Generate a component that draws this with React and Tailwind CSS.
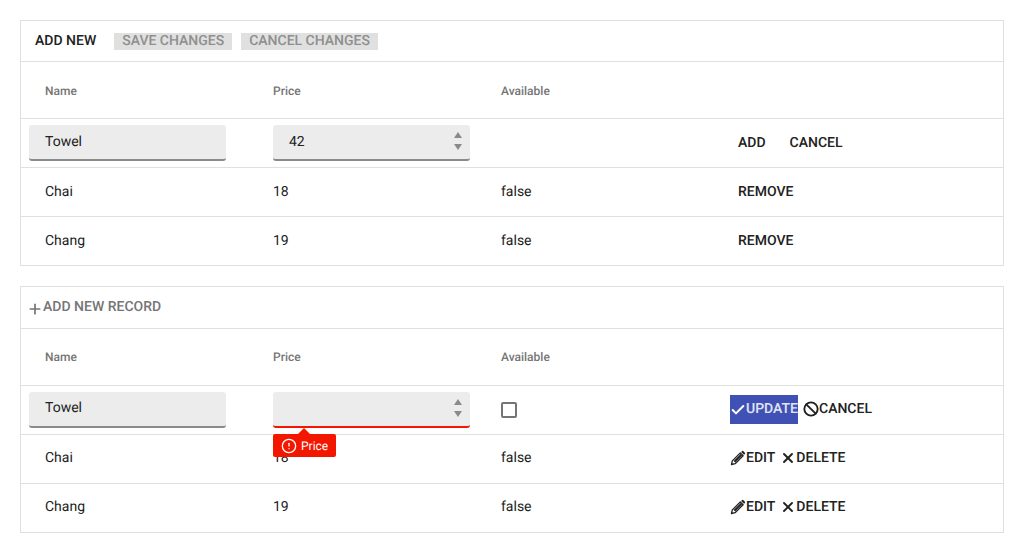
import { Check, Plus, Ban, X, CircleAlert } from 'lucide-react';

const font = { fontFamily: 'Roboto, sans-serif' };

const Spinner = () => (
  <div className="absolute right-[8px] top-[7px] flex flex-col gap-[6px]">
    <div className="w-0 h-0 mx-auto border-x-[4px] border-x-transparent border-b-[6px] border-b-[#8a8a8a]" />
    <div className="w-0 h-0 mx-auto border-x-[4px] border-x-transparent border-t-[6px] border-t-[#8a8a8a]" />
  </div>
);

const PencilIcon = () => (
  <svg width="16" height="16" viewBox="0 0 16 16" className="shrink-0">
    <path d="M1.5 14.5l.8-3.6 8-8 2.8 2.8-8 8z" fill="none" stroke="currentColor" strokeWidth="1.3" strokeLinejoin="round" />
    <path d="M3.6 10.9l7-7 1.5 1.5-7 7z" fill="currentColor" />
    <path d="M11.2 2l.9-.9a.8.8 0 0 1 1.1 0l1.7 1.7a.8.8 0 0 1 0 1.1l-.9.9z" fill="currentColor" />
  </svg>
);

const Field = ({ value, spinner, invalid, className = '' }) => (
  <div
    className={`relative w-[197px] h-[36px] bg-[#ececec] rounded-[3px] border-b-2 text-sm text-[#212121] flex items-center ${
      invalid ? 'border-[#f31700]' : 'border-[#8a8a8a]'
    } ${className}`}
  >
    <span>{value}</span>
    {spinner && <Spinner />}
  </div>
);

const Row = ({ children, last }) => (
  <div className={`flex items-center text-sm text-[#212121] ${last ? 'h-[48px]' : 'h-[49px] border-b border-[#e0e0e0]'}`}>
    {children}
  </div>
);

const Cell = ({ children, className = '' }) => (
  <div className={`w-[228px] shrink-0 pl-6 ${className}`}>{children}</div>
);

const Header = ({ className = 'pt-[1px]' }) => (
  <div className={`flex items-center h-[57px] border-b border-[#e0e0e0] text-xs font-medium text-[#757575] ${className}`}>
    <Cell>Name</Cell>
    <Cell>Price</Cell>
    <Cell>Available</Cell>
  </div>
);

const TextBtn = ({ children }) => (
  <span className="text-sm font-medium text-[#212121]">{children}</span>
);

const IconBtn = ({ icon, label }) => (
  <span className="flex items-center text-sm font-medium text-[#212121]">
    {icon}
    <span>{label}</span>
  </span>
);

const EditDelete = () => (
  <div className="pl-[25px] flex items-center gap-[5px]">
    <IconBtn icon={<PencilIcon />} label="EDIT" />
    <IconBtn icon={<X size={16} strokeWidth={2.8} />} label="DELETE" />
  </div>
);

export default function App() {
  return (
    <div className="px-5 pt-5 bg-white min-h-[552px] [text-rendering:geometricPrecision]" style={font}>
      {/* Batch editing grid */}
      <div className="border border-[#e0e0e0]">
        <div className="flex items-center h-[41px] border-b border-[#e0e0e0] pl-[14px] text-sm font-medium">
          <span className="text-[#212121]">ADD NEW</span>
          <span className="ml-[18px] h-[17px] px-2 flex items-center bg-[#e0e0e0] text-[#8f8f8f]">SAVE CHANGES</span>
          <span className="ml-[9px] h-[17px] px-2 flex items-center bg-[#e0e0e0] text-[#8f8f8f]">CANCEL CHANGES</span>
        </div>
        <Header />
        <Row>
          <div className="w-[228px] shrink-0 pl-2">
            <Field value="Towel" className="pl-4" />
          </div>
          <div className="w-[228px] shrink-0">
            <Field value="42" spinner className="pl-4 ml-6" />
          </div>
          <Cell />
          <div className="pl-[33px] flex gap-6">
            <TextBtn>ADD</TextBtn>
            <TextBtn>CANCEL</TextBtn>
          </div>
        </Row>
        <Row>
          <Cell>Chai</Cell>
          <Cell>18</Cell>
          <Cell>false</Cell>
          <div className="pl-[33px]"><TextBtn>REMOVE</TextBtn></div>
        </Row>
        <Row last>
          <Cell>Chang</Cell>
          <Cell>19</Cell>
          <Cell>false</Cell>
          <div className="pl-[33px]"><TextBtn>REMOVE</TextBtn></div>
        </Row>
      </div>

      {/* Inline editing grid */}
      <div className="mt-5 border border-[#e0e0e0]">
        <div className="flex items-center h-[42px] border-b border-[#e0e0e0] pl-2 text-sm font-medium text-[#757575]">
          <Plus size={16} strokeWidth={2.6} className="-ml-[2px] mt-[2px]" />
          <span className="pb-[2px]">ADD NEW RECORD</span>
        </div>
        <Header className="pb-[1px]" />
        <Row>
          <div className="w-[228px] shrink-0 pl-2">
            <Field value="Towel" className="pl-4 pb-[2px]" />
          </div>
          <div className="relative w-[228px] shrink-0">
            <Field spinner invalid className="ml-6" />
            <div className="absolute left-6 top-[42px] z-10 h-[23px] px-[8px] flex items-center gap-[4px] bg-[#f31700] rounded-[2px] text-xs text-white">
              <div className="absolute left-[25px] top-[-6px] w-0 h-0 border-x-[6px] border-x-transparent border-b-[6px] border-b-[#f31700]" />
              <CircleAlert size={16} strokeWidth={2} />
              <span>Price</span>
            </div>
          </div>
          <div className="w-[228px] shrink-0 pl-6">
            <div className="w-4 h-4 border-2 border-[#757575] rounded-[2px]" />
          </div>
          <div className="pl-[25px] flex items-center gap-[5px] -mt-[1px]">
            <span className="flex items-center h-[29px] w-[68px] bg-[#3f51b5] text-sm font-medium text-white/85 overflow-hidden">
              <Check size={16} strokeWidth={3} className="shrink-0 text-white" />
              <span className="pb-[2px]">UPDATE</span>
            </span>
            <span className="pb-[2px]">
              <IconBtn icon={<Ban size={16} strokeWidth={2.8} />} label="CANCEL" />
            </span>
          </div>
        </Row>
        <Row>
          <Cell className="pb-[2px]">Chai</Cell>
          <Cell className="pb-[2px]">18</Cell>
          <Cell className="pb-[2px]">false</Cell>
          <div className="pb-[2px]"><EditDelete /></div>
        </Row>
        <Row last>
          <Cell className="pb-[2px]">Chang</Cell>
          <Cell className="pb-[2px]">19</Cell>
          <Cell className="pb-[2px]">false</Cell>
          <div className="pb-[2px]"><EditDelete /></div>
        </Row>
      </div>
    </div>
  );
}
